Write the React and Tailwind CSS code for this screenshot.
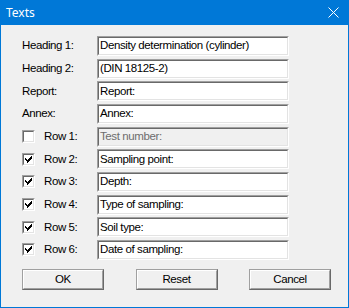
import React from "react";

const rows = [
  { label: "Heading 1:", value: "Density determination (cylinder)" },
  { label: "Heading 2:", value: "(DIN 18125-2)" },
  { label: "Report:", value: "Report:" },
  { label: "Annex:", value: "Annex:" },
  { label: "Row 1:", value: "Test number:", check: true, checked: false },
  { label: "Row 2:", value: "Sampling point:", check: true, checked: true },
  { label: "Row 3:", value: "Depth:", check: true, checked: true },
  { label: "Row 4:", value: "Type of sampling:", check: true, checked: true },
  { label: "Row 5:", value: "Soil type:", check: true, checked: true },
  { label: "Row 6:", value: "Date of sampling:", check: true, checked: true },
];

const Sunken = ({ className = "", children }) => (
  <div
    className={`border border-t-[#a0a0a0] border-l-[#a0a0a0] border-r-white border-b-white ${className}`}
  >
    <div className="h-full w-full border border-t-[#696969] border-l-[#696969] border-r-[#e3e3e3] border-b-[#e3e3e3]">
      {children}
    </div>
  </div>
);

const CheckBox = ({ checked }) => (
  <Sunken className="w-[13px] h-[13px] shrink-0">
    <div className="w-full h-full bg-white flex items-center justify-center">
      {checked && (
        <svg width="7" height="7" viewBox="0 0 7 7" shapeRendering="crispEdges">
          <path
            d="M0 2h1v1h-1z M0 3h2v1h-2z M1 4h2v1h-2z M2 5h1v1h-1z M1 3h1v2h-1z M2 4h1v3h-1z M3 3h1v3h-1z M4 2h1v3h-1z M5 1h1v3h-1z M6 0h1v3h-1z"
            fill="#000"
          />
        </svg>
      )}
    </div>
  </Sunken>
);

const Button = ({ children }) => (
  <div className="w-[82px] h-[21px] border border-t-[#a0a0a0] border-l-[#a0a0a0] border-r-[#696969] border-b-[#696969]">
    <div className="w-full h-full border border-t-white border-l-white border-r-[#a0a0a0] border-b-[#a0a0a0] bg-[#f0f0f0] flex items-center justify-center text-black">
      {children}
    </div>
  </div>
);

export default function App() {
  return (
    <div
      className="w-[349px] h-[308px] bg-[#f0f0f0] border border-t-0 border-[#0078d7] flex flex-col text-[11.5px] tracking-[-0.4px] text-black"
      style={{ fontFamily: '"Liberation Sans", Arial, sans-serif' }}
    >
      {/* title bar */}
      <div className="h-[25px] bg-[#0078d7] flex items-center justify-between pl-[6px] pr-[10px] -mx-px">
        <span
          className="text-white text-[12px] tracking-normal"
          style={{ fontFamily: '"Noto Sans", "Liberation Sans", sans-serif' }}
        >
          Texts
        </span>
        <svg width="11" height="11" viewBox="0 0 11 11">
          <path d="M0.5 0.5L10.5 10.5M10.5 0.5L0.5 10.5" stroke="#fff" strokeWidth="1" />
        </svg>
      </div>

      <div className="flex flex-col gap-[2.67px] pl-[21px] pt-[11px]">
        {rows.map((r) => (
          <div key={r.label} className="flex items-center h-[20px]">
            <div className="w-[75px] flex items-center">
              {r.check ? (
                <>
                  <CheckBox checked={r.checked} />
                  <span className="ml-[9px]">{r.label}</span>
                </>
              ) : (
                <span>{r.label}</span>
              )}
            </div>
            <Sunken className="w-[192px] h-[20px]">
              <div
                className={`w-full h-full flex items-center pl-[1px] ${
                  r.checked === false ? "bg-[#f0f0f0] text-[#6d6d6d]" : "bg-white"
                }`}
              >
                {r.value}
              </div>
            </Sunken>
          </div>
        ))}
      </div>

      <div className="flex justify-between pl-[21px] pr-[17px] mt-[9px]">
        <Button>OK</Button>
        <Button>Reset</Button>
        <Button>Cancel</Button>
      </div>
    </div>
  );
}
